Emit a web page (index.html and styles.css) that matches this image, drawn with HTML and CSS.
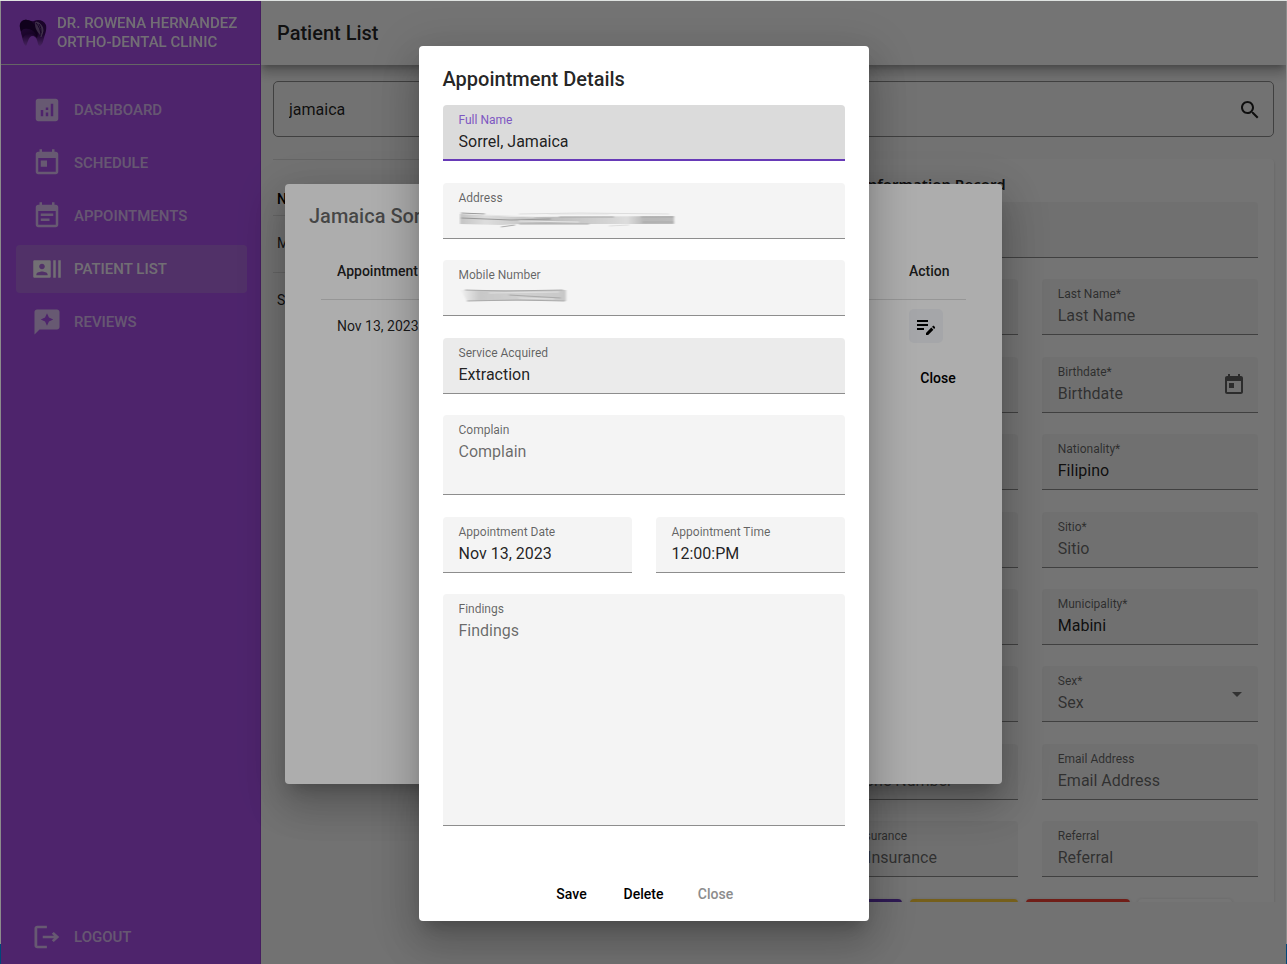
FILE: index.html
```html
<!DOCTYPE html>
<html lang="en">
<head>
<meta charset="utf-8">
<meta name="viewport" content="width=device-width, initial-scale=1">
<title>Patient List</title>
<link rel="stylesheet" href="styles.css">
</head>
<body>
<div class="app">
  <aside class="sidebar">
    <div class="brand">
      <svg class="brand-logo" viewBox="0 0 28 28" aria-hidden="true">
        <defs>
          <linearGradient id="tooth" x1="0" y1="0" x2="0" y2="1">
            <stop offset="0" stop-color="#3a0a5c"/>
            <stop offset=".55" stop-color="#400c64"/>
            <stop offset="1" stop-color="#9a4ed0"/>
          </linearGradient>
          <linearGradient id="swoosh" x1="0" y1="0" x2="1" y2="1">
            <stop offset="0" stop-color="#4d1478"/>
            <stop offset="1" stop-color="#26033f"/>
          </linearGradient>
        </defs>
        <path fill="url(#tooth)" d="M1 8C0 3 4 0 8 1c3 0 5 2 7 1 4-2 10-1 12 4 1 5-1 9-2 13-1 3-1 6-4 8-2 0-2-3-3-6-1-3-3-4-4-4-3 0-4 2-5 5-1 2-1 4-2 5-2-1-3-5-4-9C2 14 2 12 1 8Z"/>
        <path fill="#26033f" d="M1 9C0 4 4 0 8 1c4 0 8 4 10 9 1 4 1 6 0 9-2-6-5-9-10-9-3 0-5 1-6 3Z"/>
        <path fill="url(#swoosh)" d="M2 13c1-3 4-4 7-3 5 1 8 4 9 9-3-4-6-5-9-4-2 0-4 1-5 4Z"/>
        <path fill="#7d5c96" d="M16 3c5 0 8 4 8 9 0 2-1 4-2 6-1-3-4-5-5-8-1-2-1-5-1-7Z"/>
        <path fill="none" stroke="#38105a" d="M17 4c3 3 5 8 5 13M20 5c2 3 2 6 2 9"/>
        <path fill="none" stroke="#9f87b0" stroke-width=".7" d="M17 3c5 1 7 5 7 9l-2 6"/>
      </svg>
      <div class="brand-name">DR. ROWENA HERNANDEZ<br>ORTHO-DENTAL CLINIC</div>
    </div>
    <nav class="nav">
      <a class="nav-item" href="#dashboard">
        <svg class="nav-icon" viewBox="0 0 24 24"><path d="M19 3H5c-1.100 0-2 .9-2 2v14c0 1.100.9 2 2 2h14c1.100 0 2-.9 2-2V5c0-1.100-.9-2-2-2zM9 17H7v-5h2v5zm4 0h-2v-3h2v3zm0-5h-2v-2h2v2zm4 5h-2V7h2v10z"/></svg>
        DASHBOARD</a>
      <a class="nav-item" href="#schedule">
        <svg class="nav-icon" viewBox="0 0 24 24"><path d="M19 3h-1V1h-2v2H8V1H6v2H5c-1.110 0-2 .9-2 2v14c0 1.100.89 2 2 2h14c1.100 0 2-.9 2-2V5c0-1.100-.9-2-2-2zm0 16H5V8h14v11zM7 10h5v5H7z"/></svg>
        SCHEDULE</a>
      <a class="nav-item" href="#appointments">
        <svg class="nav-icon" viewBox="0 0 24 24"><path d="M17 10H7v2h10v-2zm2-7h-1V1h-2v2H8V1H6v2H5c-1.110 0-2 .9-2 2v14c0 1.100.89 2 2 2h14c1.100 0 2-.9 2-2V5c0-1.100-.9-2-2-2zm0 16H5V8h14v11zm-5-5H7v2h7v-2z"/></svg>
        APPOINTMENTS</a>
      <a class="nav-item nav-item-active" href="#patients" aria-current="page">
        <svg class="nav-icon" viewBox="0 0 24 24"><path d="M21 5v14h2V5h-2zm-4 14h2V5h-2v14zM14 5H2c-.55 0-1 .45-1 1v12c0 .55.45 1 1 1h12c.55 0 1-.45 1-1V6c0-.55-.45-1-1-1zM8 7.750c1.240 0 2.250 1.010 2.250 2.250S9.240 12.250 8 12.250 5.750 11.240 5.750 10 6.760 7.750 8 7.750zM12.500 17h-9v-.75c0-1.500 3-2.250 4.500-2.250s4.500.75 4.500 2.250V17z"/></svg>
        PATIENT LIST</a>
      <a class="nav-item" href="#reviews">
        <svg class="nav-icon" viewBox="0 0 24 24"><path d="M20 2H4c-1.100 0-2 .9-2 2v18l4-4h14c1.100 0 2-.9 2-2V4c0-1.100-.9-2-2-2zm-6.430 9.570L12 15l-1.570-3.430L7 10l3.430-1.570L12 5l1.570 3.430L17 10l-3.430 1.570z"/></svg>
        REVIEWS</a>
      <a class="nav-item nav-logout" href="#logout">
        <svg class="nav-icon" viewBox="0 0 24 24"><path d="m17 8-1.410 1.410L17.170 11H9v2h8.170l-1.580 1.580L17 16l4-4-4-4zM5 5h7V3H5c-1.100 0-2 .9-2 2v14c0 1.100.9 2 2 2h7v-2H5V5z" transform="matrix(1.100 0 0 1 -1.300 0)"/></svg>
        LOGOUT</a>
    </nav>
  </aside>

  <main class="main">
    <header class="toolbar"><h1>Patient List</h1></header>
    <div class="content">
      <div class="search">
        <input class="search-input" type="text" value="jamaica" aria-label="Search patients">
        <button class="search-button" type="button" aria-label="Search">
          <svg viewBox="0 0 24 24"><path d="M15.500 14h-.79l-.28-.27C15.410 12.590 16 11.110 16 9.500 16 5.910 13.090 3 9.500 3S3 5.910 3 9.500 5.910 16 9.500 16c1.610 0 3.090-.59 4.230-1.570l.27.28v.79l5 4.990L20.490 19l-4.990-5zm-6 0C7.010 14 5 11.990 5 9.500S7.010 5 9.500 5 14 7.010 14 9.500 11.990 14 9.500 14z"/></svg>
        </button>
      </div>
      <div class="panels">
        <table class="patients">
          <thead><tr><th>Name</th></tr></thead>
          <tbody><tr><td>M</td></tr><tr><td>Sorrel, Jamaica</td></tr></tbody>
        </table>
        <form class="record">
          <h2>Patient Information Record</h2>
          <div class="record-fields">
            <div class="field field-wide"><input aria-label="Record"></div>
            <div class="field"><input aria-label="Middle"></div>
            <div class="field"><label for="last">Last Name*</label><input id="last" placeholder="Last Name"></div>
            <div class="field"><input aria-label="Row two"></div>
            <div class="field field-split">
              <div><label for="birth">Birthdate*</label><input id="birth" placeholder="Birthdate"></div>
              <svg class="calendar-icon" viewBox="0 0 24 24"><path d="M19 3h-1V1h-2v2H8V1H6v2H5c-1.110 0-2 .9-2 2v14c0 1.100.89 2 2 2h14c1.100 0 2-.9 2-2V5c0-1.100-.9-2-2-2zm0 16H5V8h14v11zM7 10h5v5H7z"/></svg>
            </div>
            <div class="field"><input aria-label="Row three"></div>
            <div class="field"><label for="nation">Nationality*</label><input id="nation" value="Filipino"></div>
            <div class="field"><input aria-label="Row four"></div>
            <div class="field"><label for="sitio">Sitio*</label><input id="sitio" placeholder="Sitio"></div>
            <div class="field"><input aria-label="Row five"></div>
            <div class="field"><label for="town">Municipality*</label><input id="town" value="Mabini"></div>
            <div class="field"><input aria-label="Row six"></div>
            <div class="field field-split">
              <div><label for="sex">Sex*</label><select id="sex"><option>Sex</option></select></div>
              <svg class="caret-icon" viewBox="0 0 10 5"><path d="M0 0h10L5 5z"/></svg>
            </div>
            <div class="field"><label for="phone">Telephone Number</label><input id="phone" placeholder="Telephone Number"></div>
            <div class="field"><label for="email">Email Address</label><input id="email" placeholder="Email Address"></div>
            <div class="field"><label for="insurance">Dental Insurance</label><input id="insurance" placeholder="Dental Insurance"></div>
            <div class="field"><label for="referral">Referral</label><input id="referral" placeholder="Referral"></div>
          </div>
          <div class="record-actions">
            <button class="tone tone-purple" type="button" aria-label="Save record"></button>
            <button class="tone tone-yellow" type="button" aria-label="Update record"></button>
            <button class="tone tone-red" type="button" aria-label="Delete record"></button>
            <button class="tone tone-plain" type="button" aria-label="Clear record"></button>
          </div>
        </form>
      </div>
    </div>
  </main>

  <div class="overlay">
    <section class="dialog dialog-history" role="dialog" aria-labelledby="history-title">
      <h2 class="history-title" id="history-title">Jamaica Sorrel</h2>
      <table class="history">
        <thead><tr><th>Appointment Date</th><th class="history-action">Action</th></tr></thead>
        <tbody><tr><td>Nov 13, 2023</td><td class="history-action">
          <button class="edit-button" type="button" aria-label="Edit appointment">
            <svg viewBox="0 0 24 24"><path d="M3 10h11v2H3v-2zm0-2h11V6H3v2zm0 8h7v-2H3v2zm15.010-3.130.71-.71c.39-.39 1.020-.39 1.410 0l.71.71c.39.39.39 1.020 0 1.410l-.71.71-2.120-2.120zm-.71.71-5.300 5.300V21h2.120l5.300-5.300-2.120-2.120z"/></svg>
          </button></td></tr></tbody>
      </table>
      <div class="dialog-actions dialog-actions-end"><button class="text-button" type="button">Close</button></div>
    </section>
  </div>

  <div class="overlay">
    <section class="dialog dialog-details" role="dialog" aria-modal="true" aria-labelledby="details-title">
      <h2 class="details-title" id="details-title">Appointment Details</h2>
      <form class="details-fields">
        <div class="field field-focused"><label for="full">Full Name</label><input id="full" value="Sorrel, Jamaica"></div>
        <div class="field field-masked"><label for="address">Address</label><input id="address">
          <svg class="smear" viewBox="0 0 218 20" width="218" height="20" aria-hidden="true">
            <defs>
              <linearGradient id="smear-a"><stop offset="0" stop-color="#c4c4c4"/><stop offset=".12" stop-color="#ddd"/><stop offset=".4" stop-color="#bcbcbc"/><stop offset=".7" stop-color="#d4d4d4"/><stop offset=".78" stop-color="#ddd"/><stop offset=".86" stop-color="#b8b8b8"/><stop offset="1" stop-color="#bbb"/></linearGradient>
              <filter id="soft" x="-5%" y="-50%" width="110%" height="200%"><feGaussianBlur stdDeviation="1.200 .5"/></filter>
            </defs>
            <g filter="url(#soft)" fill="none">
              <path fill="url(#smear-a)" d="M1 4l60 3 154-1v8H60l-18 1L1 14z"/>
              <path stroke="#999" d="M2 3l24 1M2 8l50 2 40-1"/>
              <path stroke="#aaa" d="M42 17l14-2M100 7h55M182 7h33M183 12h32M60 14h70"/>
              <path stroke="#e6e6e6" d="M25 5l50 2M60 11l60 1M90 4h60"/>
              <path stroke="#ddd" d="M60 4l60-1 90 1M150 16l20-1"/>
            </g>
          </svg></div>
        <div class="field field-masked"><label for="mobile">Mobile Number</label><input id="mobile">
          <svg class="smear" viewBox="0 0 112 20" width="112" height="20" aria-hidden="true">
            <defs><linearGradient id="smear-b"><stop offset="0" stop-color="#f0f0f0"/><stop offset=".18" stop-color="#c8c8c8"/><stop offset=".6" stop-color="#d0d0d0"/><stop offset="1" stop-color="#c8c8c8"/></linearGradient></defs>
            <g filter="url(#soft)" fill="none">
              <path fill="url(#smear-b)" d="M2 3h105v11H8z"/>
              <path stroke="#aaa" d="M6 3l40 1 58-1M50 8l52 3M8 14l50-1 48 1"/>
              <path stroke="#e0e0e0" d="M30 6l70-1M60 11l35 1"/>
            </g>
          </svg></div>
        <div class="field field-hover"><label for="service">Service Acquired</label><input id="service" value="Extraction"></div>
        <div class="field field-short"><label for="complain">Complain</label><textarea id="complain" placeholder="Complain"></textarea></div>
        <div class="field-pair">
          <div class="field"><label for="date">Appointment Date</label><input id="date" value="Nov 13, 2023"></div>
          <div class="field"><label for="time">Appointment Time</label><input id="time" value="12:00:PM"></div>
        </div>
        <div class="field field-tall"><label for="findings">Findings</label><textarea id="findings" placeholder="Findings"></textarea></div>
      </form>
      <div class="dialog-actions">
        <button class="text-button" type="button">Save</button>
        <button class="text-button" type="button">Delete</button>
        <button class="text-button text-button-muted" type="button">Close</button>
      </div>
    </section>
  </div>
</div>
</body>
</html>
```
FILE: styles.css
```css
*, *::before, *::after { box-sizing: border-box; }

body {
  margin: 0;
  height: 100vh;
  padding: 1px 1px 0;
  overflow: hidden;
  background: linear-gradient(#dfe3e1 1px, #8c8c8c 1px, #8c8c8c calc(100% - 20px), #00477a calc(100% - 20px));
  font-family: Roboto, "Liberation Sans", sans-serif;
  font-size: 14px;
  color: rgba(0, 0, 0, .87);
}

h1, h2 { margin: 0; font-size: 20px; font-weight: 500; line-height: 32px; }

button, input, select, textarea {
  font: inherit;
  color: inherit;
  border: 0;
  background: none;
  padding: 0;
  margin: 0;
  outline: 0;
}

svg { display: block; fill: currentColor; }

.app {
  position: relative;
  display: flex;
  height: 100%;
  overflow: hidden;
  background: #f9f9f9;
}

/* Sidebar */
.sidebar {
  position: relative;
  flex: 0 0 260px;
  display: flex;
  flex-direction: column;
  border-right: 1px solid #9940d2;
  background: #aa50ec;
  color: #fff;
}

.brand {
  display: flex;
  align-items: center;
  gap: 10px;
  height: 64px;
  padding: 0 16px 0 18px;
  border-bottom: 1px solid #ddd;
}

.brand-logo { width: 28px; height: 28px; }

.brand-name {
  font-size: 15px;
  font-weight: 500;
  line-height: 19px;
  white-space: nowrap;
  opacity: .92;
}

.nav {
  flex: 1;
  display: flex;
  flex-direction: column;
  gap: 5px;
  padding: 21px 13px 3px 15px;
}

.nav-item {
  display: flex;
  align-items: center;
  gap: 12px;
  height: 48px;
  padding: 0 16px;
  border-radius: 4px;
  color: rgba(255, 255, 255, .65);
  font-size: 15px;
  font-weight: 500;
  text-decoration: none;
}

.nav-item-active { background: rgba(205, 200, 200, .24); color: rgba(255, 255, 255, .92); }
.nav-icon { width: 30px; height: 30px; }
.nav-logout { margin-top: auto; }

/* Main page */
.main {
  flex: 1;
  min-width: 0;
  display: flex;
  flex-direction: column;
}

.toolbar {
  display: flex;
  align-items: center;
  height: 64px;
  padding: 0 16px;
  background: #fefefe;
  box-shadow: 0 5px 5px -3px rgba(0, 0, 0, .2), 0 8px 10px 1px rgba(0, 0, 0, .14), 0 3px 14px 2px rgba(0, 0, 0, .12);
}

.content {
  flex: 1;
  min-height: 0;
  display: flex;
  flex-direction: column;
  padding: 16px 12px 62px;
}

.search {
  flex: none;
  display: flex;
  align-items: center;
  height: 56px;
  padding: 1px 11px 0 15px;
  border: 1px solid #8d8d8d;
  border-radius: 5px;
}

.search-input { flex: 1; min-width: 0; font-size: 16px; line-height: 24px; }
.search-button svg { width: 24px; height: 24px; }

.panels {
  flex: 1;
  min-height: 0;
  display: grid;
  grid-template-columns: minmax(0, 1fr) minmax(0, 1fr);
  gap: 24px;
  align-items: start;
  margin: 22px -12px 0 0;
  padding-right: 12px;
  overflow: hidden;
}

.patients { width: 100%; border-collapse: collapse; border-top: 1px solid #dedede; }
.patients th, .patients td { height: 57px; padding: 0 4px; text-align: left; border-bottom: 1px solid #dedede; }
.patients th { height: 56px; padding-top: 23px; font-weight: 500; color: #000; }
.patients td { padding-bottom: 3px; }
.patients tr:last-child td { border: 0; }

.record {
  display: grid;
  grid-template-columns: minmax(0, 1fr);
  min-width: 0;
  padding: 9px 16px 16px;
  border-radius: 4px;
  background: #fefefe;
  box-shadow: 0 2px 1px -1px rgba(0, 0, 0, .2), 0 1px 1px rgba(0, 0, 0, .14), 0 1px 3px rgba(0, 0, 0, .12);
}

.record h2 {
  margin-bottom: 2px;
  padding: 0 4px;
  font-family: "Noto Sans", sans-serif;
  font-size: 15px;
  font-weight: 600;
}

.record-fields {
  display: grid;
  grid-template-columns: minmax(0, 1fr) minmax(0, 1fr);
  column-gap: 24px;
  align-content: space-between;
  min-height: 675px;
}

.field-wide { grid-column: 1 / -1; }
.record-actions { display: flex; justify-content: flex-end; gap: 8px; padding: 22px 26px 0 0; }

.tone { width: 108px; height: 36px; border-radius: 4px; box-shadow: 0 1px 4px rgba(0, 0, 0, .2); }
.tone-purple { width: 94px; background: #673ab7; }
.tone-yellow { background: #ffcf3d; }
.tone-red { width: 104px; background: #f44336; }
.tone-plain { width: 94px; background: #fff; }

/* Form fields */
.field {
  display: flex;
  flex-direction: column;
  min-width: 0;
  min-height: 56px;
  padding: 7px 16px 6px;
  border-radius: 4px 4px 0 0;
  border-bottom: 1px solid #8d8d8d;
  background: #f4f4f4;
}

.field label { display: block; font-size: 12px; line-height: 16px; color: rgba(0, 0, 0, .6); }
.field input, .field select, .field textarea {
  display: block;
  width: 100%;
  height: 24px;
  margin-top: 2px;
  font-size: 16px;
  line-height: 24px;
  resize: none;
  appearance: none;
}
.field textarea { flex: 1; }
.field ::placeholder { color: rgba(0, 0, 0, .58); opacity: 1; }
.field select { color: rgba(0, 0, 0, .58); }

.field-split { flex-direction: row; align-items: center; justify-content: space-between; padding-right: 12px; }
.field-split > div { flex: 1; min-width: 0; }
.calendar-icon { width: 24px; height: 24px; color: rgba(0, 0, 0, .6); }
.caret-icon { width: 10px; height: 5px; margin-right: 4px; color: rgba(0, 0, 0, .55); }

.field-focused { padding-bottom: 5px; border-bottom: 2px solid #673ab7; background: #dbdbdb; }
.field-focused label { color: #7e57c2; }
.field-hover { background: #ebebeb; }
.field-short { min-height: 80px; }
.field-tall { min-height: 232px; }
.field-pair { display: grid; grid-template-columns: 1fr 1fr; gap: 24px; }

.field-masked { position: relative; }
.smear { position: absolute; left: 16px; top: 27px; }

/* Dialogs */
.overlay {
  position: absolute;
  inset: 0;
  display: flex;
  align-items: center;
  justify-content: center;
  padding-top: 2px;
  background: rgba(0, 0, 0, .32);
}

.dialog {
  display: flex;
  flex-direction: column;
  border-radius: 4px;
  background: #fff;
  box-shadow: 0 11px 15px -7px rgba(0, 0, 0, .2), 0 24px 38px 3px rgba(0, 0, 0, .14), 0 9px 46px 8px rgba(0, 0, 0, .12);
}

.dialog-history { width: 717px; max-width: 90vw; min-height: 600px; padding: 16px 24px; }
.history-title { color: rgba(0, 0, 0, .6); }
.history { margin: 12px 12px 0; border-collapse: collapse; }
.history th, .history td { height: 52px; padding: 0 16px; text-align: left; }
.history th { height: 56px; font-weight: 500; border-bottom: 1px solid #dedede; }
.history .history-action { width: 73px; }
.edit-button { display: grid; place-items: center; width: 34px; height: 34px; border-radius: 5px; background: #f3f5f9; color: #000; }
.edit-button svg { width: 24px; height: 24px; }

.dialog-details { width: 450px; max-width: 90vw; padding: 17px 24px 1px; }
.details-title { margin-bottom: 10px; }
.details-fields { display: grid; align-content: space-between; min-height: 721px; margin-bottom: 42px; }

.dialog-actions { display: flex; justify-content: center; gap: 8px; padding: 8px; }
.dialog-actions-end { justify-content: flex-end; }
.text-button { min-width: 64px; height: 36px; font-weight: 500; color: #000; }
.text-button-muted { color: #8c8c8c; }
```
